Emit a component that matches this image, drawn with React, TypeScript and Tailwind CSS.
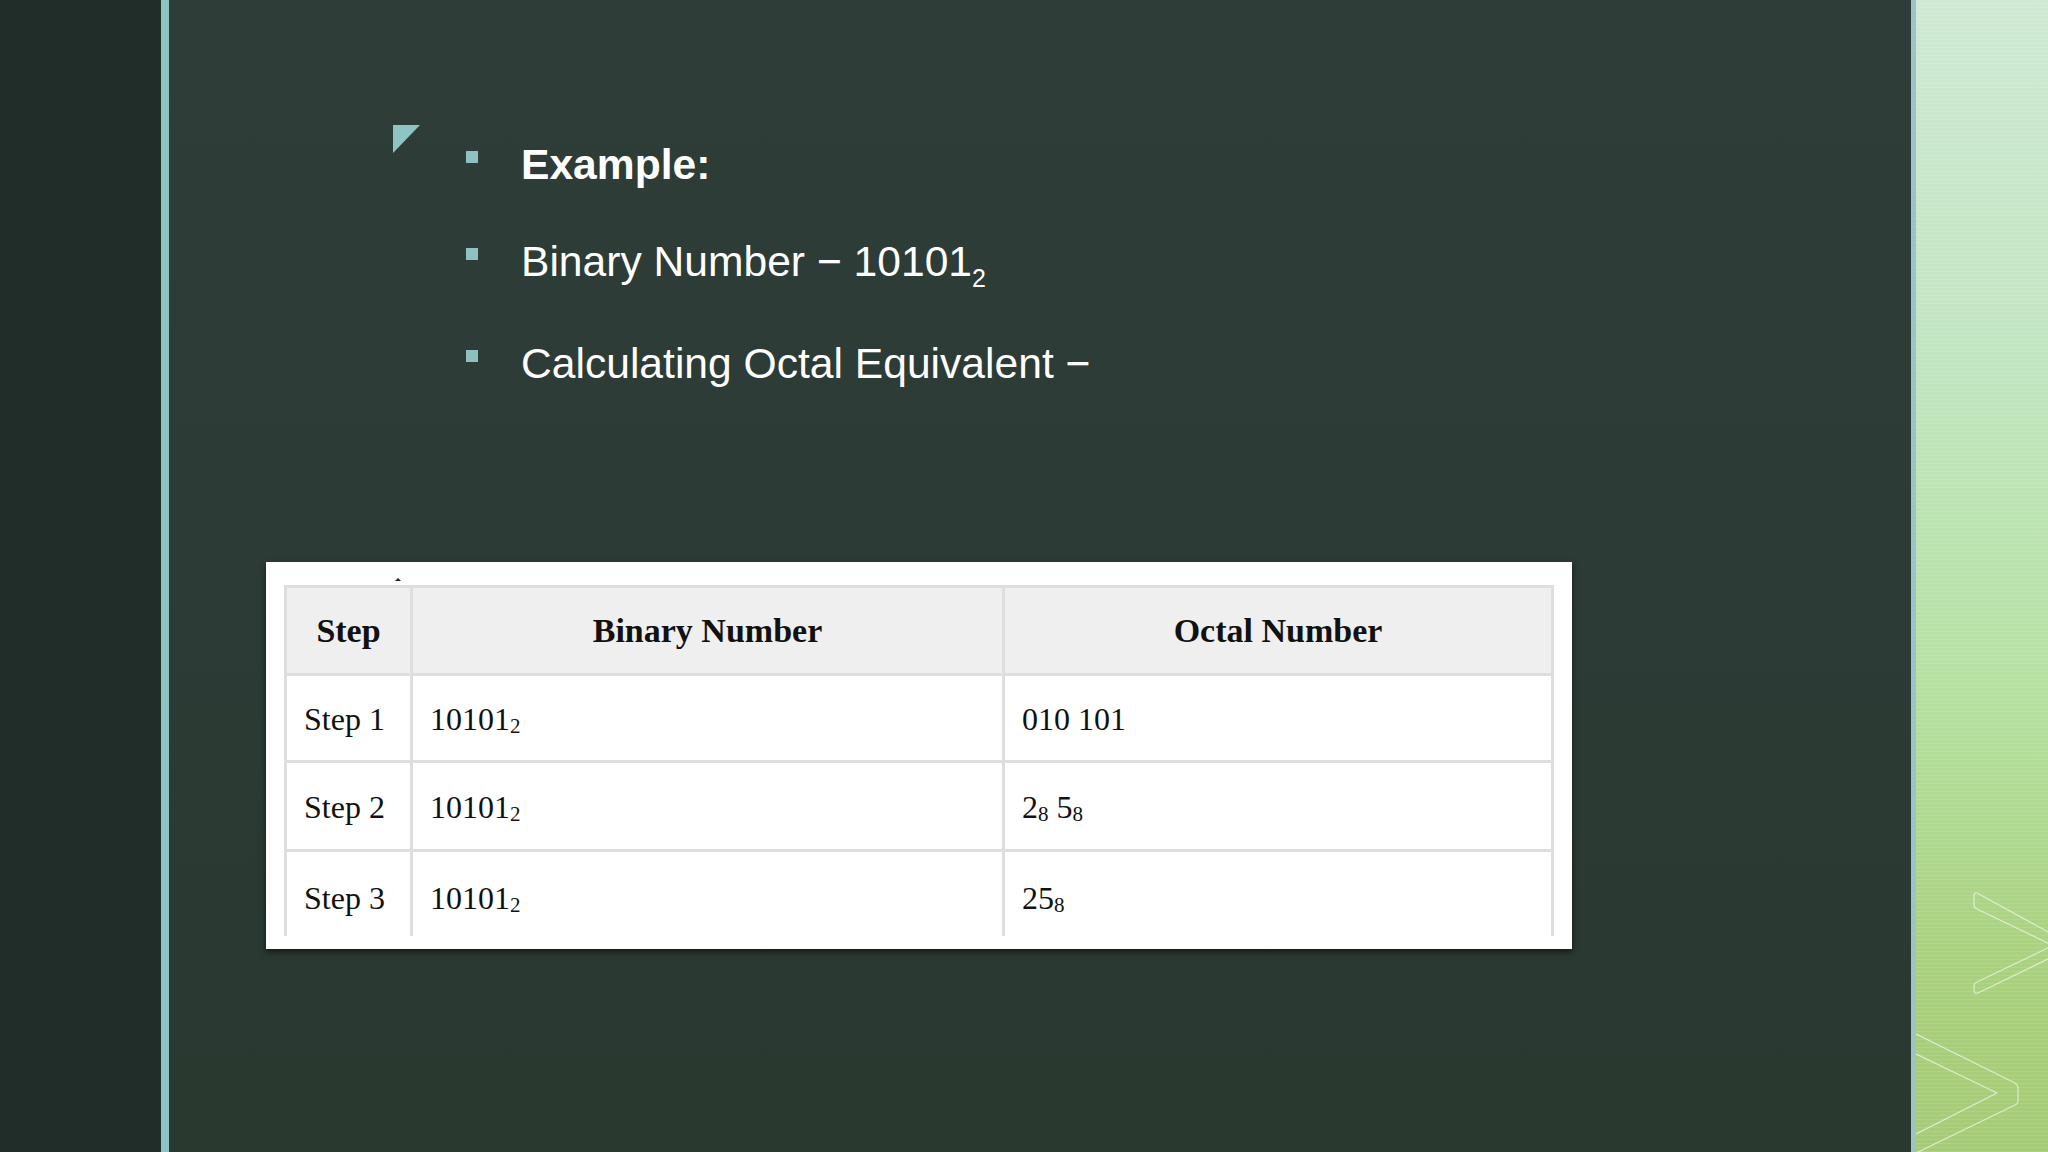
import React from "react";

function Sub({ children }: { children: React.ReactNode }) {
  return <span className="text-[21px] align-[-3px]">{children}</span>;
}

function HeadCell({ children }: { children: React.ReactNode }) {
  return (
    <div className="bg-[#efefef] flex items-center justify-center font-bold text-[34px] text-[#111]">
      <span>{children}</span>
    </div>
  );
}

function BodyCell({ children }: { children: React.ReactNode }) {
  return (
    <div className="bg-white flex items-center pl-[17px] pt-[2px] text-[32px] text-[#111] whitespace-nowrap">
      <span>{children}</span>
    </div>
  );
}

function Bullet({ children, bold, className }: { children: React.ReactNode; bold?: boolean; className?: string }) {
  return (
    <div className={"flex items-start " + (className ?? "")}>
      <div className="w-[12px] h-[12px] mt-[12px] bg-[#8fc0c0] shrink-0" />
      <div className={"ml-[43px] h-[50px] leading-[50px] text-[42.6px] text-white whitespace-nowrap " + (bold ? "font-bold" : "")}>
        {children}
      </div>
    </div>
  );
}

function Chevrons() {
  return (
    <svg width="132" height="1152" viewBox="0 0 132 1152" fill="none" className="block">
      <g stroke="rgba(255,255,255,0.6)" strokeWidth="1.2" strokeLinejoin="round">
        <path d="M134 933 L61 893 Q58 892 58 896 L58 905 Q58 908 61 909 L134 944" />
        <path d="M134 947 L61 982 Q58 983 58 986 L58 990 Q58 994 62 993 L134 958" />
        <path d="M-2 1033 L99 1083 Q102 1085 102 1089 L102 1100 Q102 1104 99 1105 L-2 1154" />
        <path d="M-2 1053 L81 1093 L-2 1135" />
      </g>
    </svg>
  );
}

export default function App() {
  return (
    <div className="w-[2048px] h-[1152px] flex overflow-hidden font-['Liberation_Sans',Arial,sans-serif]">
      <div className="w-[161px] h-full bg-[#202d28] shrink-0" />
      <div className="w-[8px] h-full bg-[#8ec3c5] shrink-0" />

      <div className="flex-1 h-full bg-[linear-gradient(180deg,#2e3d37_0%,#2c3b35_50%,#293930_100%)] flex flex-col">
        <div className="flex items-start pl-[224px] pt-[125px]">
          <svg width="27" height="28" viewBox="0 0 27 28" className="shrink-0">
            <polygon points="0,0 27,0 0,28" fill="#8fc4c4" />
          </svg>
          <div className="ml-[46px] mt-[14px] flex flex-col">
            <Bullet bold>Example:</Bullet>
            <Bullet className="mt-[47px]">
              Binary Number − 10101<span className="text-[25px] align-[-11px]">2</span>
            </Bullet>
            <Bullet className="mt-[52px]">Calculating Octal Equivalent −</Bullet>
          </div>
        </div>

        <div className="ml-[97px] mt-[174px] w-[1306px] h-[387px] bg-white shadow-[0_3px_6px_rgba(0,0,0,0.55)] pl-[18px] pt-[15px] font-['Liberation_Serif','Times_New_Roman',serif]">
          <div className="h-[8px] flex items-start">
            <div className="ml-[111px] mt-[1px] w-0 h-0 border-l-[3px] border-r-[3px] border-b-[3px] border-l-transparent border-r-transparent border-b-[#222]" />
          </div>
          <div className="w-[1270px] h-[351px] overflow-hidden">
            <div className="grid grid-cols-[123px_589px_546px] grid-rows-[85px_84px_86px_90px] gap-[3px] bg-[#dedede] p-[3px] pb-0">
              <HeadCell>Step</HeadCell>
              <HeadCell>Binary Number</HeadCell>
              <HeadCell>Octal Number</HeadCell>

              <BodyCell>Step 1</BodyCell>
              <BodyCell>10101<Sub>2</Sub></BodyCell>
              <BodyCell>010 101</BodyCell>

              <BodyCell>Step 2</BodyCell>
              <BodyCell>10101<Sub>2</Sub></BodyCell>
              <BodyCell>2<Sub>8</Sub> 5<Sub>8</Sub></BodyCell>

              <BodyCell>Step 3</BodyCell>
              <BodyCell>10101<Sub>2</Sub></BodyCell>
              <BodyCell>25<Sub>8</Sub></BodyCell>
            </div>
          </div>
        </div>
      </div>

      <div className="w-[5px] h-full bg-[#9cc3c8] shrink-0" />
      <div className="w-[132px] h-full shrink-0 bg-[linear-gradient(180deg,#cfe9d4_0%,#c2e5c2_30%,#b6e0a2_60%,#a9d07e_85%,#a6cb78_100%)]">
        <div className="w-full h-full bg-[repeating-linear-gradient(0deg,rgba(255,255,255,0.10)_0px,rgba(255,255,255,0.10)_1px,transparent_1px,transparent_4px)]">
          <Chevrons />
        </div>
      </div>
    </div>
  );
}
